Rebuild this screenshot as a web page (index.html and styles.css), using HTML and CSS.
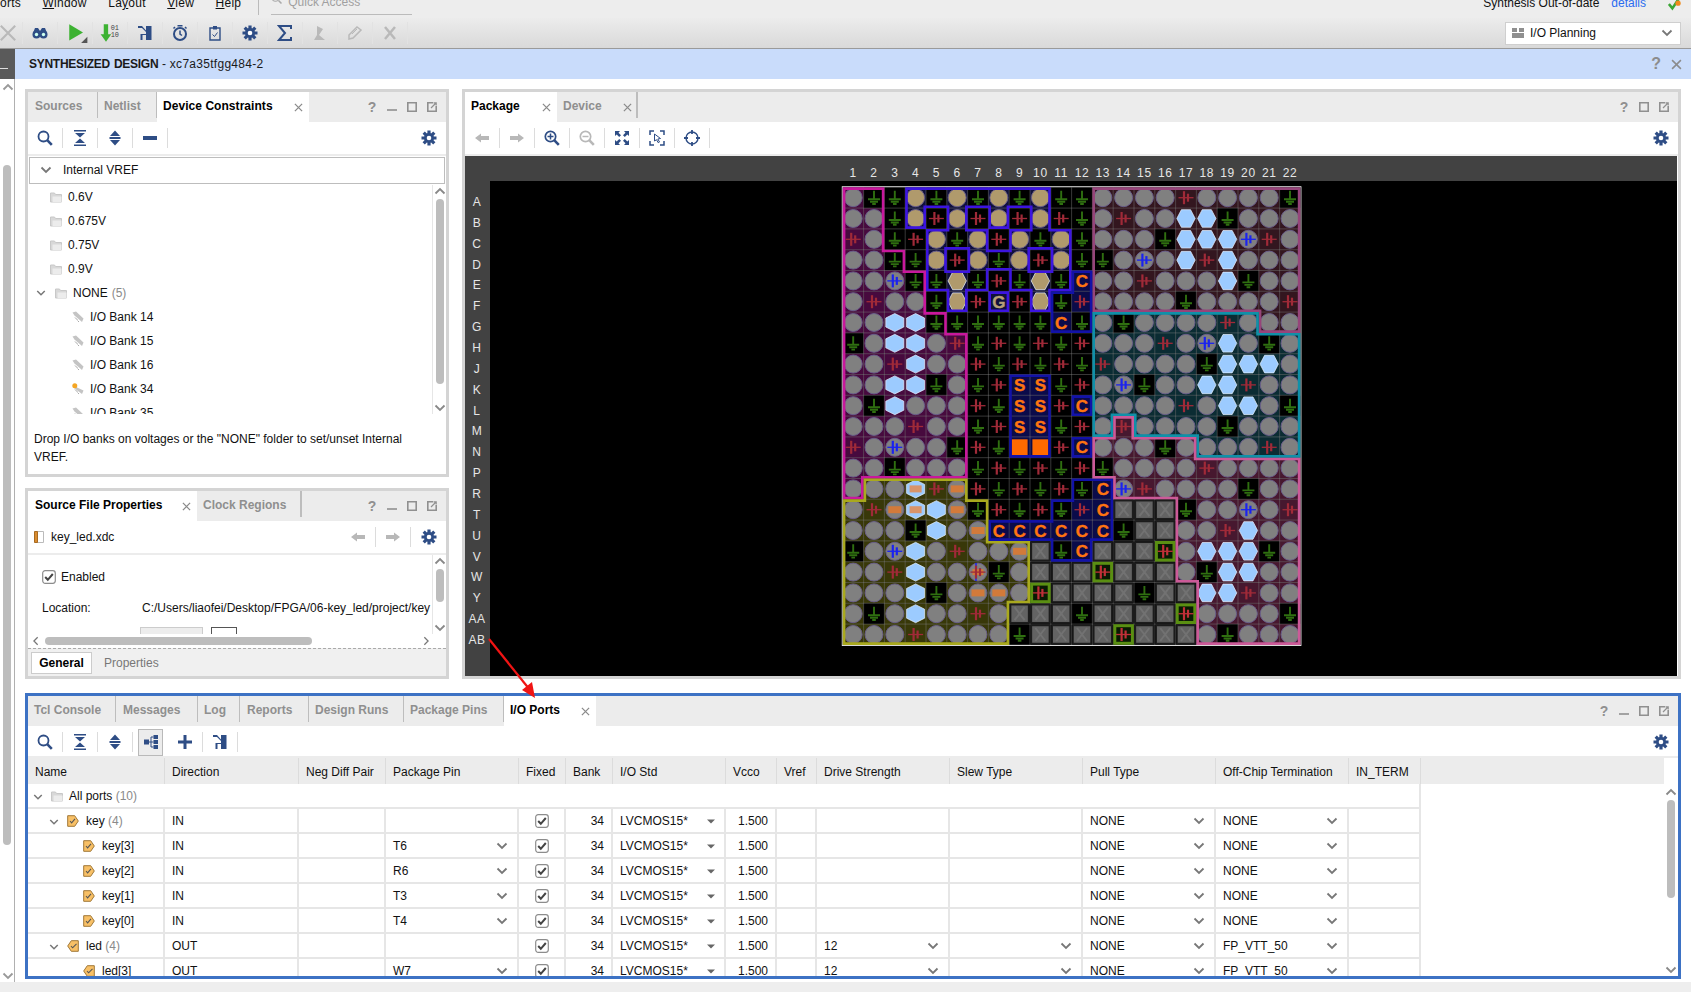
FILE: index.html
```html
<!DOCTYPE html>
<html lang="en">
<head>
<meta charset="utf-8">
<title>I/O Planning</title>
<link rel="stylesheet" href="styles.css">
</head>
<body>
<svg class="defs" width="0" height="0" aria-hidden="true">
  <defs>
    <symbol id="i-search" viewBox="0 0 16 16"><circle cx="6.5" cy="6.5" r="5" fill="none" stroke="currentColor" stroke-width="1.8"/><path d="M10.2 10.2l4.6 4.6" stroke="currentColor" stroke-width="2.6"/></symbol>
    <symbol id="i-collapse" viewBox="0 0 16 16"><path d="M2 0h12v1.6H2zM3 3h10L8 7.6zM8 8.4L13 13H3zM2 14.4h12V16H2z" fill="currentColor"/></symbol>
    <symbol id="i-expand" viewBox="0 0 16 16"><path d="M8 .5L13 6H3zM2.5 7h11v2h-11zM3 10h10l-5 5.500z" fill="currentColor"/></symbol>
    <symbol id="i-minus" viewBox="0 0 16 16"><path d="M1 6h14v4H1z" fill="currentColor"/></symbol>
    <symbol id="i-plus" viewBox="0 0 16 16"><path d="M6.500 1h3v5.500H15v3H9.500V15h-3V9.500H1v-3h5.500z" fill="currentColor"/></symbol>
    <symbol id="i-hier" viewBox="0 0 16 16"><path d="M1 5.500h5v5H1zM10.500 1H15v4h-4.500zM10.500 6h4.500v4h-4.500zM10.500 11H15v4h-4.500z" fill="currentColor"/><path d="M6 8h4.500M8 3v10M8 3h2.500M8 13h2.500" stroke="currentColor" fill="none"/></symbol>
    <symbol id="i-fork" viewBox="0 0 16 16"><path d="M1 1h4l4 4.500V1h5.500v14H9v-5H5.500V15H3.500v-6H9V7L5 3H1z" fill="currentColor"/></symbol>
    <symbol id="i-gear" viewBox="0 0 16 16"><g stroke="currentColor" stroke-width="3.200"><path d="M8 .5v15M.5 8h15M2.700 2.700l10.600 10.600M13.300 2.700L2.700 13.300"/></g><circle cx="8" cy="8" r="5" fill="currentColor"/><circle cx="8" cy="8" r="2.300" fill="#fff"/></symbol>
    <symbol id="i-left" viewBox="0 0 16 16"><path d="M1 8l6-4.500V6h8v4H7v2.500z" fill="currentColor"/></symbol>
    <symbol id="i-right" viewBox="0 0 16 16"><path d="M15 8L9 3.500V6H1v4h8v2.500z" fill="currentColor"/></symbol>
    <symbol id="i-zoomin" viewBox="0 0 16 16"><circle cx="6.500" cy="6.500" r="5.200" fill="none" stroke="currentColor" stroke-width="1.700"/><path d="M10.200 10.200l4.600 4.600" stroke="currentColor" stroke-width="2.600"/><path d="M6.500 3.500v6M3.500 6.500h6" stroke="currentColor" stroke-width="1.500"/></symbol>
    <symbol id="i-zoomout" viewBox="0 0 16 16"><circle cx="6.500" cy="6.500" r="5.200" fill="none" stroke="currentColor" stroke-width="1.700"/><path d="M10.200 10.200l4.600 4.600" stroke="currentColor" stroke-width="2.600"/><path d="M3.500 6.500h6" stroke="currentColor" stroke-width="1.500"/></symbol>
    <symbol id="i-fit" viewBox="0 0 16 16"><path d="M1 1h5L4.500 2.700 7 5.200 5.200 7 2.700 4.500 1 6zM15 1v5l-1.700-1.500L10.800 7 9 5.200l2.500-2.500L10 1zM1 15v-5l1.700 1.500L5.200 9 7 10.800l-2.500 2.500L6 15zM15 15h-5l1.500-1.700L9 10.800 10.800 9l2.500 2.500L15 10z" fill="currentColor"/></symbol>
    <symbol id="i-select" viewBox="0 0 16 16"><path d="M1 5V1h4M11 1h4v4M15 11v4h-4M5 15H1v-4" fill="none" stroke="currentColor" stroke-width="1.500"/><path d="M5.500 4l6 4.500-2.700.5 1.700 3-1.300.7-1.700-3L5.500 11z" fill="#fff" stroke="currentColor"/></symbol>
    <symbol id="i-target" viewBox="0 0 16 16"><circle cx="8" cy="8" r="6" fill="none" stroke="currentColor" stroke-width="1.400"/><path d="M8 0v4M8 12v4M0 8h4M12 8h4" stroke="currentColor" stroke-width="1.800"/></symbol>
    <symbol id="i-x" viewBox="0 0 10 10"><path d="M1 1l8 8M9 1L1 9" stroke="currentColor" stroke-width="1.400" fill="none"/></symbol>
    <symbol id="i-down" viewBox="0 0 12 12"><path d="M1.500 3.500L6 8l4.500-4.500" stroke="currentColor" stroke-width="1.800" fill="none"/></symbol>
    <symbol id="i-up" viewBox="0 0 12 12"><path d="M1.500 8.500L6 4l4.500 4.500" stroke="currentColor" stroke-width="1.800" fill="none"/></symbol>
    <symbol id="i-chl" viewBox="0 0 12 12"><path d="M8 1.500L3.500 6 8 10.500" stroke="currentColor" stroke-width="1.500" fill="none"/></symbol>
    <symbol id="i-chr" viewBox="0 0 12 12"><path d="M4 1.500L8.500 6 4 10.500" stroke="currentColor" stroke-width="1.500" fill="none"/></symbol>
    <symbol id="i-tri" viewBox="0 0 8 8"><path d="M0 2.500h8L4 6.500z" fill="currentColor"/></symbol>
    <symbol id="i-dash" viewBox="0 0 10 10"><path d="M0 8h10" stroke="currentColor" stroke-width="1.600"/></symbol>
    <symbol id="i-box" viewBox="0 0 10 10"><path d="M.8.8h8.400v8.400H.8z" fill="none" stroke="currentColor" stroke-width="1.600"/></symbol>
    <symbol id="i-pop" viewBox="0 0 10 10"><path d="M6 .8H.8v8.400h8.400V4" fill="none" stroke="currentColor" stroke-width="1.600"/><path d="M4 6l5-5M6.500.8h2.700v2.700" fill="none" stroke="currentColor" stroke-width="1.200"/></symbol>
    <symbol id="i-folder" viewBox="0 0 12 12"><path d="M.5 2h4l1 1.500h6V11H.5z" fill="#d8d8d8" stroke="#c8c8c8"/><path d="M2.500 5.500h9V11h-9z" fill="#ececec"/></symbol>
    <symbol id="i-bank" viewBox="0 0 12 12"><path d="M.5 1.500l3.500-1 7.500 7-1.500 3.500-7.500-6.500z" fill="#c4c4c4"/><path d="M3 6.500l2.500 2.500M5.500 9.500L7 11" stroke="#aaa"/></symbol>
    <symbol id="i-bankon" viewBox="0 0 12 12"><path d="M3 3.500l8.500 4-1.500 3.500L2 5z" fill="#c4c4c4"/><circle cx="2.800" cy="2.800" r="2.500" fill="#f5a623"/><path d="M3 6.500l2.500 2.500M5.500 9.500L7 11" stroke="#aaa"/></symbol>
    <symbol id="i-port" viewBox="0 0 12 12"><path d="M.7.700h7l3.600 5.300-3.600 5.300h-7z" fill="#f8c066" stroke="#a07838"/><path d="M3 6l1.600 1.800L8 3.800" stroke="#555" stroke-width="1.100" fill="none"/></symbol>
    <symbol id="i-portout" viewBox="0 0 12 12"><path d="M11.300.700h-7L.7 6l3.600 5.300h7z" fill="#f8c066" stroke="#a07838"/><path d="M4 6l1.600 1.800L9.500 3.800" stroke="#555" stroke-width="1.100" fill="none"/></symbol>
    <symbol id="i-check" viewBox="0 0 14 14"><rect x=".7" y=".7" width="12.600" height="12.600" rx="2.500" fill="#fff" stroke="#8c8c8c" stroke-width="1.200"/><path d="M3.200 7l2.600 2.800L10.800 4" stroke="#444" stroke-width="2" fill="none"/></symbol>
  </defs>
</svg>

<div class="menubar">
  <span>orts</span><span><u>W</u>indow</span><span>La<u>y</u>out</span><span><u>V</u>iew</span><span><u>H</u>elp</span>
  <div class="quick"><svg class="ic12" viewBox="0 0 16 16"><circle cx="6" cy="6" r="5" fill="none" stroke="#aaa" stroke-width="1.500"/><path d="M10 10l4 4" stroke="#aaa" stroke-width="2"/></svg>Quick Access</div>
  <div class="status"><span>Synthesis Out-of-date</span><span class="link">details</span><svg class="ic16" viewBox="0 0 16 16"><path d="M1 8l4 5L13 1" stroke="#3aa535" stroke-width="3" fill="none"/><circle cx="11.500" cy="7" r="3" fill="#f08a1c"/></svg></div>
</div>

<div class="mainbar">
  <div class="tool-top dim"><svg class="ic16" viewBox="0 0 10 10"><path d="M.5.500l9 9M9.500.500l-9 9" stroke="currentColor" stroke-width="1.300"/></svg></div>
  <div class="tool-top"><svg class="ic16" viewBox="0 0 16 16"><circle cx="4.500" cy="9.500" r="4" fill="#2e4d85"/><circle cx="11.500" cy="9.500" r="4" fill="#2e4d85"/><path d="M3 3h3l2 3 2-3h3l2 5H1z" fill="#2e4d85"/><circle cx="4.500" cy="9.500" r="1.700" fill="#cfe"/><circle cx="11.500" cy="9.500" r="1.700" fill="#cfe"/></svg></div>
  <div class="tool-top"><svg class="ic-play" viewBox="0 0 16 16"><path d="M1 1l11 6.500L1 14z" fill="#3db232"/><path d="M15.500 11v5h-5z" fill="#555"/></svg></div>
  <div class="tool-top"><svg class="ic-run" viewBox="0 0 16 16"><path d="M3 1h3.500v8H9l-4.200 6L.5 9H3z" fill="#3db232"/><text x="8.600" y="5.500" class="bits">01</text><text x="8.600" y="11" class="bits">10</text></svg></div>
  <div class="tool-top blue"><svg class="ic16"><use href="#i-fork"/></svg></div>
  <div class="tool-top blue"><svg class="ic16" viewBox="0 0 16 16"><circle cx="8" cy="9" r="6" fill="none" stroke="currentColor" stroke-width="2"/><path d="M8 5.500V9l2 1.500M5.500 .8h5M3 2l-1.500 1.500M13 2l1.500 1.500" stroke="currentColor" stroke-width="1.500" fill="none"/></svg></div>
  <div class="tool-top blue"><svg class="ic16" viewBox="0 0 16 16"><path d="M3 3h10v12H3z" fill="none" stroke="currentColor" stroke-width="1.400"/><path d="M6 1h4v3.500H6z" fill="currentColor"/><path d="M5.500 9.500l2 2 3-4" stroke="currentColor" fill="none"/></svg></div>
  <div class="tool-top blue"><svg class="ic16"><use href="#i-gear"/></svg></div>
  <div class="tool-top blue"><svg class="ic16" viewBox="0 0 16 16"><path d="M14 4V1H2l6 7-6 7h12v-3" fill="none" stroke="currentColor" stroke-width="2"/></svg></div>
  <div class="tool-top dim"><svg class="ic16" viewBox="0 0 16 16"><path d="M5 1l6 3-4 6 6 5H2l3-5z" fill="currentColor"/></svg></div>
  <div class="tool-top dim"><svg class="ic16" viewBox="0 0 16 16"><path d="M2 10l8-8 4 3-8 8-4 1z" fill="none" stroke="currentColor" stroke-width="1.500"/><path d="M5 9l5-5" stroke="currentColor"/></svg></div>
  <div class="tool-top dim"><svg class="ic16" viewBox="0 0 16 16"><path d="M3 2l10 12M13 2L3 14" stroke="currentColor" stroke-width="2.500"/></svg></div>
  <div class="layout-select"><span class="layout-ic"></span><span>I/O Planning</span><svg class="ic12 chev"><use href="#i-down"/></svg></div>
</div>

<div class="banner">
  <div class="banner-tab"><span></span></div>
  <div class="banner-title"><b>SYNTHESIZED DESIGN</b> - xc7a35tfgg484-2</div>
  <span class="banner-q">?</span>
  <svg class="banner-x"><use href="#i-x"/></svg>
</div>

<div class="main">
  <div class="gutter">
    <svg class="ic12 sb-arrow"><use href="#i-up"/></svg>
    <div class="gutter-thumb"></div>
    <svg class="ic12 sb-arrow gutter-down"><use href="#i-down"/></svg>
  </div>

  <div class="workspace">
    <div class="top-row">
      <div class="left-col">
        <section class="panel panel-dc">
          <div class="tabs">
            <div class="tab w-sources">Sources</div>
            <div class="tab w-netlist">Netlist</div>
            <div class="tab active w-dc">Device Constraints<svg class="tab-x"><use href="#i-x"/></svg></div>
            <div class="win-ctrls"><span class="q">?</span><svg class="wc"><use href="#i-dash"/></svg><svg class="wc"><use href="#i-box"/></svg><svg class="wc"><use href="#i-pop"/></svg></div>
          </div>
          <div class="toolbar">
            <div class="tool"><svg class="ic16"><use href="#i-search"/></svg></div>
            <div class="tool"><svg class="ic16"><use href="#i-collapse"/></svg></div>
            <div class="tool"><svg class="ic16"><use href="#i-expand"/></svg></div>
            <div class="tool"><svg class="ic16"><use href="#i-minus"/></svg></div>
            <div class="tool gear"><svg class="ic16"><use href="#i-gear"/></svg></div>
          </div>
          <div class="vref-head"><svg class="ic12 chev"><use href="#i-down"/></svg><span>Internal VREF</span></div>
          <div class="tree-wrap">
            <div class="tree">
              <div class="tree-row l1"><svg class="ic12"><use href="#i-folder"/></svg>0.6V</div>
              <div class="tree-row l1"><svg class="ic12"><use href="#i-folder"/></svg>0.675V</div>
              <div class="tree-row l1"><svg class="ic12"><use href="#i-folder"/></svg>0.75V</div>
              <div class="tree-row l1"><svg class="ic12"><use href="#i-folder"/></svg>0.9V</div>
              <div class="tree-row l0"><svg class="ic10 chev"><use href="#i-down"/></svg><svg class="ic12"><use href="#i-folder"/></svg>NONE <span class="count">(5)</span></div>
              <div class="tree-row l2"><svg class="ic12"><use href="#i-bank"/></svg>I/O Bank 14</div>
              <div class="tree-row l2"><svg class="ic12"><use href="#i-bank"/></svg>I/O Bank 15</div>
              <div class="tree-row l2"><svg class="ic12"><use href="#i-bank"/></svg>I/O Bank 16</div>
              <div class="tree-row l2"><svg class="ic12"><use href="#i-bankon"/></svg>I/O Bank 34</div>
              <div class="tree-row l2"><svg class="ic12"><use href="#i-bank"/></svg>I/O Bank 35</div>
            </div>
            <div class="vscroll">
              <svg class="ic12 sb-arrow"><use href="#i-up"/></svg>
              <div class="thumb thumb-tree"></div>
              <svg class="ic12 sb-arrow sb-end"><use href="#i-down"/></svg>
            </div>
          </div>
          <p class="note">Drop I/O banks on voltages or the "NONE" folder to set/unset Internal VREF.</p>
        </section>

        <section class="panel panel-sfp">
          <div class="tabs">
            <div class="tab active w-sfp">Source File Properties<svg class="tab-x"><use href="#i-x"/></svg></div>
            <div class="tab w-clock">Clock Regions</div>
            <div class="win-ctrls"><span class="q">?</span><svg class="wc"><use href="#i-dash"/></svg><svg class="wc"><use href="#i-box"/></svg><svg class="wc"><use href="#i-pop"/></svg></div>
          </div>
          <div class="filebar">
            <svg class="ic12 file-ic" viewBox="0 0 10 12"><path d="M3.500.500h6v11h-6z" fill="#fff" stroke="#bbb"/><path d="M.5.500h3v11h-3z" fill="#d98c30" stroke="#a86a20"/></svg>
            <span class="file-name">key_led.xdc</span>
            <div class="tool dimmed"><svg class="ic16"><use href="#i-left"/></svg></div>
            <div class="tool dimmed"><svg class="ic16"><use href="#i-right"/></svg></div>
            <div class="tool gear-inline"><svg class="ic16"><use href="#i-gear"/></svg></div>
          </div>
          <div class="props-wrap">
            <div class="props">
              <div class="enabled"><svg class="ic14"><use href="#i-check"/></svg><span>Enabled</span></div>
              <div class="location"><span class="loc-label">Location:</span><span class="loc-path">C:/Users/liaofei/Desktop/FPGA/06-key_led/project/key</span></div>
              <div class="btn-row"><span class="stub stub-a"></span><span class="stub stub-b"></span></div>
            </div>
            <div class="vscroll">
              <svg class="ic12 sb-arrow"><use href="#i-up"/></svg>
              <div class="thumb thumb-props"></div>
              <svg class="ic12 sb-arrow sb-end"><use href="#i-down"/></svg>
            </div>
          </div>
          <div class="hscroll"><svg class="ic10"><use href="#i-chl"/></svg><div class="hthumb"></div><svg class="ic10 sb-end-h"><use href="#i-chr"/></svg></div>
          <div class="subtabs"><span class="subtab on">General</span><span class="subtab">Properties</span></div>
        </section>
      </div>

      <section class="panel panel-pkg">
        <div class="tabs">
          <div class="tab active w-pkg">Package<svg class="tab-x"><use href="#i-x"/></svg></div>
          <div class="tab w-device">Device<svg class="tab-x"><use href="#i-x"/></svg></div>
          <div class="win-ctrls"><span class="q">?</span><svg class="wc"><use href="#i-box"/></svg><svg class="wc"><use href="#i-pop"/></svg></div>
        </div>
        <div class="toolbar">
          <div class="tool dimmed"><svg class="ic16"><use href="#i-left"/></svg></div>
          <div class="tool dimmed"><svg class="ic16"><use href="#i-right"/></svg></div>
          <div class="tool"><svg class="ic16"><use href="#i-zoomin"/></svg></div>
          <div class="tool dimmed"><svg class="ic16"><use href="#i-zoomout"/></svg></div>
          <div class="tool"><svg class="ic16"><use href="#i-fit"/></svg></div>
          <div class="tool"><svg class="ic16"><use href="#i-select"/></svg></div>
          <div class="tool"><svg class="ic16"><use href="#i-target"/></svg></div>
          <div class="tool gear"><svg class="ic16"><use href="#i-gear"/></svg></div>
        </div>
        <div id="package" class="package"></div>
      </section>
    </div>

    <section class="panel-io">
      <div class="tabs">
        <div class="tab w-tcl">Tcl Console</div>
        <div class="tab w-msg">Messages</div>
        <div class="tab w-log">Log</div>
        <div class="tab w-rep">Reports</div>
        <div class="tab w-runs">Design Runs</div>
        <div class="tab w-pins">Package Pins</div>
        <div class="tab active w-io">I/O Ports<svg class="tab-x"><use href="#i-x"/></svg></div>
        <div class="win-ctrls"><span class="q">?</span><svg class="wc"><use href="#i-dash"/></svg><svg class="wc"><use href="#i-box"/></svg><svg class="wc"><use href="#i-pop"/></svg></div>
      </div>
      <div class="toolbar">
        <div class="tool"><svg class="ic16"><use href="#i-search"/></svg></div>
        <div class="tool"><svg class="ic16"><use href="#i-collapse"/></svg></div>
        <div class="tool"><svg class="ic16"><use href="#i-expand"/></svg></div>
        <div class="tool toggled"><svg class="ic16"><use href="#i-hier"/></svg></div>
        <div class="tool"><svg class="ic16"><use href="#i-plus"/></svg></div>
        <div class="tool"><svg class="ic16"><use href="#i-fork"/></svg></div>
        <div class="tool gear"><svg class="ic16"><use href="#i-gear"/></svg></div>
      </div>
      <div class="table-wrap">
        <table class="ports">
          <colgroup>
            <col class="c-name"><col class="c-dir"><col class="c-neg"><col class="c-pkg"><col class="c-fix"><col class="c-bank"><col class="c-std"><col class="c-vcco"><col class="c-vref"><col class="c-drive"><col class="c-slew"><col class="c-pull"><col class="c-off"><col class="c-term"><col>
          </colgroup>
          <thead><tr><th>Name</th><th>Direction</th><th>Neg Diff Pair</th><th>Package Pin</th><th>Fixed</th><th>Bank</th><th>I/O Std</th><th>Vcco</th><th>Vref</th><th>Drive Strength</th><th>Slew Type</th><th>Pull Type</th><th>Off-Chip Termination</th><th>IN_TERM</th><th class="filler"></th></tr></thead>
          <tbody>
            <tr><td colspan="14" class="name ind-all"><svg class="ic10 chev"><use href="#i-down"/></svg><svg class="ic12"><use href="#i-folder"/></svg>All ports <span class="count">(10)</span></td></tr>
            <tr><td class="name ind-grp"><svg class="ic10 chev"><use href="#i-down"/></svg><svg class="ic12"><use href="#i-port"/></svg>key <span class="count">(4)</span></td><td>IN</td><td></td><td></td><td class="ck"><svg class="ic14"><use href="#i-check"/></svg></td><td class="num">34</td><td><div class="sel">LVCMOS15*<svg class="tri"><use href="#i-tri"/></svg></div></td><td class="num">1.500</td><td></td><td></td><td></td><td><div class="sel">NONE<svg class="ic12 chev"><use href="#i-down"/></svg></div></td><td><div class="sel">NONE<svg class="ic12 chev"><use href="#i-down"/></svg></div></td><td></td></tr>
            <tr><td class="name ind-leaf"><svg class="ic12"><use href="#i-port"/></svg>key[3]</td><td>IN</td><td></td><td><div class="sel">T6<svg class="ic12 chev"><use href="#i-down"/></svg></div></td><td class="ck"><svg class="ic14"><use href="#i-check"/></svg></td><td class="num">34</td><td><div class="sel">LVCMOS15*<svg class="tri"><use href="#i-tri"/></svg></div></td><td class="num">1.500</td><td></td><td></td><td></td><td><div class="sel">NONE<svg class="ic12 chev"><use href="#i-down"/></svg></div></td><td><div class="sel">NONE<svg class="ic12 chev"><use href="#i-down"/></svg></div></td><td></td></tr>
            <tr><td class="name ind-leaf"><svg class="ic12"><use href="#i-port"/></svg>key[2]</td><td>IN</td><td></td><td><div class="sel">R6<svg class="ic12 chev"><use href="#i-down"/></svg></div></td><td class="ck"><svg class="ic14"><use href="#i-check"/></svg></td><td class="num">34</td><td><div class="sel">LVCMOS15*<svg class="tri"><use href="#i-tri"/></svg></div></td><td class="num">1.500</td><td></td><td></td><td></td><td><div class="sel">NONE<svg class="ic12 chev"><use href="#i-down"/></svg></div></td><td><div class="sel">NONE<svg class="ic12 chev"><use href="#i-down"/></svg></div></td><td></td></tr>
            <tr><td class="name ind-leaf"><svg class="ic12"><use href="#i-port"/></svg>key[1]</td><td>IN</td><td></td><td><div class="sel">T3<svg class="ic12 chev"><use href="#i-down"/></svg></div></td><td class="ck"><svg class="ic14"><use href="#i-check"/></svg></td><td class="num">34</td><td><div class="sel">LVCMOS15*<svg class="tri"><use href="#i-tri"/></svg></div></td><td class="num">1.500</td><td></td><td></td><td></td><td><div class="sel">NONE<svg class="ic12 chev"><use href="#i-down"/></svg></div></td><td><div class="sel">NONE<svg class="ic12 chev"><use href="#i-down"/></svg></div></td><td></td></tr>
            <tr><td class="name ind-leaf"><svg class="ic12"><use href="#i-port"/></svg>key[0]</td><td>IN</td><td></td><td><div class="sel">T4<svg class="ic12 chev"><use href="#i-down"/></svg></div></td><td class="ck"><svg class="ic14"><use href="#i-check"/></svg></td><td class="num">34</td><td><div class="sel">LVCMOS15*<svg class="tri"><use href="#i-tri"/></svg></div></td><td class="num">1.500</td><td></td><td></td><td></td><td><div class="sel">NONE<svg class="ic12 chev"><use href="#i-down"/></svg></div></td><td><div class="sel">NONE<svg class="ic12 chev"><use href="#i-down"/></svg></div></td><td></td></tr>
            <tr><td class="name ind-grp"><svg class="ic10 chev"><use href="#i-down"/></svg><svg class="ic12"><use href="#i-portout"/></svg>led <span class="count">(4)</span></td><td>OUT</td><td></td><td></td><td class="ck"><svg class="ic14"><use href="#i-check"/></svg></td><td class="num">34</td><td><div class="sel">LVCMOS15*<svg class="tri"><use href="#i-tri"/></svg></div></td><td class="num">1.500</td><td></td><td><div class="sel">12<svg class="ic12 chev"><use href="#i-down"/></svg></div></td><td><div class="sel"><span></span><svg class="ic12 chev"><use href="#i-down"/></svg></div></td><td><div class="sel">NONE<svg class="ic12 chev"><use href="#i-down"/></svg></div></td><td><div class="sel">FP_VTT_50<svg class="ic12 chev"><use href="#i-down"/></svg></div></td><td></td></tr>
            <tr><td class="name ind-leaf"><svg class="ic12"><use href="#i-portout"/></svg>led[3]</td><td>OUT</td><td></td><td><div class="sel">W7<svg class="ic12 chev"><use href="#i-down"/></svg></div></td><td class="ck"><svg class="ic14"><use href="#i-check"/></svg></td><td class="num">34</td><td><div class="sel">LVCMOS15*<svg class="tri"><use href="#i-tri"/></svg></div></td><td class="num">1.500</td><td></td><td><div class="sel">12<svg class="ic12 chev"><use href="#i-down"/></svg></div></td><td><div class="sel"><span></span><svg class="ic12 chev"><use href="#i-down"/></svg></div></td><td><div class="sel">NONE<svg class="ic12 chev"><use href="#i-down"/></svg></div></td><td><div class="sel">FP_VTT_50<svg class="ic12 chev"><use href="#i-down"/></svg></div></td><td></td></tr>
          </tbody>
        </table>
        <div class="vscroll table-scroll">
          <svg class="ic12 sb-arrow"><use href="#i-up"/></svg>
          <div class="thumb thumb-table"></div>
          <svg class="ic12 sb-arrow sb-end"><use href="#i-down"/></svg>
        </div>
      </div>
    </section>
  </div>
</div>
<div class="footer"></div>

<svg class="callout" viewBox="0 0 60 70" aria-hidden="true"><path d="M3 3L44 54" stroke="#f01414" stroke-width="2.200"/><path d="M49 62L36 54l10-8z" fill="#f01414"/></svg>

<script src="package.js"></script>
</body>
</html>
```

FILE: styles.css
```css
* { box-sizing: border-box; }
html, body { margin: 0; padding: 0; }
body {
  width: 1691px; height: 992px; overflow: hidden; position: relative;
  background: #fff; color: #111;
  font: 12px/14px "Liberation Sans", Arial, sans-serif;
  display: flex; flex-direction: column;
}
.defs { position: absolute; }
svg { display: block; flex: none; }
.ic10 { width: 10px; height: 10px; }
.ic12 { width: 12px; height: 12px; }
.ic14 { width: 14px; height: 14px; }
.ic16 { width: 16px; height: 16px; }
.chev { color: #777; }
.count { color: #8a8a8a; }

/* top chrome */
.menubar {
  height: 18px; flex: none; overflow: hidden;
  display: flex; gap: 21.5px; align-items: flex-start;
  background: #ededed; line-height: 14px; letter-spacing: .25px;
}
.menubar > span { margin-top: -4px; }
.quick {
  margin-left: -4.5px; width: 154px; height: 18px; padding: 0 0 0 12px;
  margin-top: -3px;
  display: flex; gap: 5px; align-items: flex-start; color: #a0a0a0;
  border-left: 1px solid #bbb; letter-spacing: 0;
  line-height: 10px;
  background: linear-gradient(#bbb,#bbb) no-repeat 12px 17px / 142px 1px;
}
.quick svg { margin-top: -4px; }
.status { margin-left: auto; margin-top: -4px; display: flex; padding-right: 9px; letter-spacing: 0; }
.status .link { color: #2a6cf0; margin-left: 12px; margin-right: 22px; }
.status svg { margin-top: 1px; width: 14px; height: 14px; }

.mainbar {
  height: 31px; flex: none; display: flex; align-items: center;
  background: linear-gradient(#ececec, #d9d9d9);
  border-bottom: 1px solid #9a9a9a;
}
.tool-top {
  width: 35px; height: 22px; display: flex; align-items: center; justify-content: center;
  border-right: 1px solid #e2e2e2; flex: none;
}
.tool-top:first-child { width: 31px; margin-left: -8px; justify-content: flex-start; padding-left: 8px; }
.tool-top.dim { color: #b9b9b9; }
.tool-top.blue { color: #2e4d85; }
.ic-play { width: 20px; height: 20px; margin-left: 6px; }
.ic-run { width: 20px; height: 20px; }
.bits { font: 5.500px "Liberation Mono", monospace; fill: #444; }
.layout-select {
  margin-left: auto; margin-right: 10px; width: 176px; height: 23px;
  background: #fff; border: 1px solid #cfcfcf;
  display: flex; align-items: center; padding: 0 7px 0 6px; gap: 6px;
}
.layout-select .chev { margin-left: auto; }
.layout-ic { width: 12px; height: 10px; background: linear-gradient(#8f8f8f,#8f8f8f) 0 0/5px 4px no-repeat, linear-gradient(#8f8f8f,#8f8f8f) 7px 0/5px 4px no-repeat, linear-gradient(#8f8f8f,#8f8f8f) 0 5px/12px 5px no-repeat; }

.banner {
  height: 30px; flex: none; display: flex; align-items: center;
  background: #c9dcfb;
}
.banner-tab { width: 15px; height: 30px; background: #5a5a5a; padding-top: 19px; margin-right: 14px; }
.banner-tab span { display: block; width: 8px; height: 1px; background: #ddd; }
.banner-title { color: #1a1a1a; letter-spacing: .28px; }
.banner-title b { letter-spacing: -.28px; word-spacing: 1px; }
.banner-q { margin-left: auto; font-size: 16px; font-weight: bold; color: #8c8c8c; }
.banner-x { width: 11px; height: 11px; margin: 0 9px 0 10px; color: #8c8c8c; }

/* frame */
.main { height: 903px; flex: none; display: flex; }
.gutter {
  width: 15px; flex: none; border-right: 1px solid #b0b0b0;
  display: flex; flex-direction: column; align-items: flex-start; padding: 2px 0 0 2px;
}
.gutter .sb-arrow { margin-bottom: 0; color: #999; }
.gutter-thumb { width: 8px; height: 680px; background: #bdbdbd; border-radius: 4px; margin: 72px 0 0 1px; }
.gutter-down { margin-top: auto; margin-bottom: 0; }
.workspace { flex: 1; padding: 10px 10px 0 10px; display: flex; flex-direction: column; gap: 14px; }
.top-row { height: 590px; display: flex; gap: 13px; flex: none; }
.left-col { width: 424px; display: flex; flex-direction: column; gap: 11px; flex: none; }

.panel { border: 3px solid #d4d4d4; display: flex; flex-direction: column; background: #fff; }
.panel-dc { height: 388px; }
.panel-sfp { height: 191px; }
.panel-pkg { flex: 1; min-width: 0; }
.panel-io { height: 286px; border: 3px solid #3d72c4; display: flex; flex-direction: column; flex: none; }

/* tabs */
.tabs { height: 30px; flex: none; background: #ececec; display: flex; }
.tab {
  height: 30px; padding: 7px 0 0 6px; color: #8f8f8f; font-weight: bold; flex: none;
  position: relative;
}
.tab::after { content: ""; position: absolute; right: 0; top: 0; width: 1px; height: 26px; background: #bdbdbd; }
.tab.active { background: #fff; color: #000; }
.tab.active::after { display: none; }
.tab-x { position: absolute; right: 6px; top: 11px; width: 9px; height: 9px; color: #8a8a8a; }
.w-sources { width: 70px; padding-left: 7px; } .w-netlist { width: 59px; } .w-dc { width: 152px; letter-spacing: .05px; }
.w-sfp { width: 169px; padding-left: 7px; } .w-clock { width: 105px; } .w-clock::after { width: 2px; }
.w-pkg { width: 92px; } .w-device { width: 81px; } .w-device::after { width: 2px; }
.w-tcl { width: 88px; } .w-msg { width: 82px; padding-left: 7px; } .w-log { width: 42px; } .w-rep { width: 69px; padding-left: 7px; } .w-runs { width: 95px; } .w-pins { width: 100px; }
.w-io { width: 92px; }
.win-ctrls { margin-left: auto; display: flex; align-items: center; padding: 0 9px 0 0; gap: 10px; height: 30px; }
.win-ctrls .q { font-size: 14px; font-weight: bold; color: #909090; width: 10px; text-align: center; }
.wc { width: 10px; height: 10px; color: #909090; }

/* toolbars */
.toolbar { height: 34px; flex: none; display: flex; align-items: center; border-bottom: 2px solid #ececec; color: #2e4d85; }
.panel-io .toolbar { height: 32px; padding-top: 2px; }
.tool {
  width: 35px; height: 20px; flex: none; display: flex; align-items: center; justify-content: center;
  border-right: 1px solid #dcdcdc; color: #2e4d85;
}
.tool.dimmed { color: #b8b8b8; }
.tool.gear { margin-left: auto; border: 0; }
.tool.toggled { border: 1px solid #b9b9b9; background: #ececec; height: 27px; width: 25px; margin: 0 5px; }
.tool.gear-inline { border: 0; margin-left: 0; }

/* tree */
.vref-head {
  height: 27px; flex: none; margin: 1px 1px 1px; border: 1px solid #bdbdbd;
  display: flex; align-items: center; padding: 0 0 2px 10px; gap: 11px;
}
.tree-wrap { height: 229px; flex: none; display: flex; overflow: hidden; }
.tree { flex: 1; }
.tree-row { height: 24px; display: flex; align-items: center; gap: 6px; }
.tree-row .count { margin-left: -2px; }
.l1 { padding-left: 22px; }
.l0 { padding-left: 8px; }
.l0 .ic12 { margin-left: 3px; }
.l2 { padding-left: 44px; }
.vscroll { width: 14px; flex: none; display: flex; flex-direction: column; align-items: center; border-left: 1px solid #e6e6e6; color: #888; }
.sb-arrow { color: #888; }
.sb-end { margin-top: auto; }
.thumb { width: 8px; background: #bdbdbd; border-radius: 4px; }
.thumb-tree { height: 185px; margin-top: 2px; }
.thumb-props { height: 33px; margin-top: 2px; }
.note { margin: 0; padding: 16px 10px 0 6px; line-height: 18px; }

/* source file props */
.filebar { height: 34px; flex: none; display: flex; align-items: center; padding-left: 6px; border-bottom: 2px solid #ececec; }
.file-ic { margin-right: 5px; width: 10px; }
.file-name { margin-right: auto; margin-left: 2px; }
.props-wrap { height: 79px; flex: none; display: flex; overflow: hidden; }
.props { flex: 1; min-width: 0; padding: 15px 0 0 14px; overflow: hidden; white-space: nowrap; }
.enabled { display: flex; gap: 5px; height: 14px; align-items: center; }
.location { display: flex; margin-top: 17px; height: 14px; }
.loc-label { width: 100px; flex: none; }
.btn-row { display: flex; gap: 8px; margin-top: 12px; margin-left: 98px; }
.stub { display: block; height: 20px; border: 1px solid #bbb; }
.stub-a { width: 63px; background: #ededed; border-color: #ccc; }
.stub-b { width: 26px; border-color: #555; }
.hscroll { height: 14px; flex: none; display: flex; align-items: center; padding-left: 3px; color: #777; position: relative; }
.hthumb { width: 267px; height: 8px; background: #bdbdbd; border-radius: 4px; margin-left: 4px; }
.sb-end-h { margin-left: auto; margin-right: 15px; }
.subtabs { flex: 1; background: #f0f0f0; border-top: 1px dashed #aaa; display: flex; align-items: center; padding-left: 3px; gap: 12px; }
.subtab { color: #777; height: 22px; line-height: 22px; }
.subtab.on { color: #000; font-weight: bold; background: #fff; border: 1px solid #ccc; line-height: 20px; width: 61px; text-align: center; }

/* package */
.package { flex: 1; background: #424242; min-height: 0; position: relative; margin-right: 1px; }
.package svg { position: absolute; left: 0; top: 0; }
.pkg-label { font: 12px "Liberation Sans", Arial, sans-serif; fill: #e6e6e6; text-anchor: middle; letter-spacing: .6px; }
.pkg-mark { font: bold 17px "Liberation Sans", Arial, sans-serif; text-anchor: middle; fill: #ff7410; stroke: #ff7410; stroke-width: .4px; }
.pkg-g { fill: #b8a078; stroke: #b8a078; }

/* table */
.table-wrap { flex: 1; min-height: 0; display: flex; overflow: hidden; }
.ports { width: 1636px; table-layout: fixed; border-collapse: separate; border-spacing: 0; align-self: flex-start; flex: none; }
.c-name { width: 137px; } .c-dir { width: 134px; } .c-neg { width: 87px; } .c-pkg { width: 133px; } .c-fix { width: 47px; } .c-bank { width: 47px; }
.c-std { width: 113px; } .c-vcco { width: 51px; } .c-vref { width: 40px; } .c-drive { width: 133px; } .c-slew { width: 133px; } .c-pull { width: 133px; } .c-off { width: 133px; } .c-term { width: 72px; }
.ports th {
  height: 26px; background: #ececec; font-weight: normal; text-align: left; padding: 1px 0 0 7px;
  border-right: 1px solid #dcdcdc; white-space: nowrap; overflow: hidden;
}
.ports th.filler { border: 0; }
.ports td {
  height: 25px; padding: 0 0 0 7px; white-space: nowrap; overflow: hidden;
  border-right: 2px solid #e6e6e6; border-bottom: 2px solid #e6e6e6;
}
.ports td.num { text-align: right; padding-right: 7px; }
.ports td.ck svg { margin: 0 auto; }
.ports td.ck { padding: 0; }
td.name { padding: 0; }
.ports td.ind-all svg, .ports td.ind-grp svg, .ports td.ind-leaf svg { display: inline-block; vertical-align: -2px; }
.ports td.ind-all { padding-left: 5px; }
.ports td.ind-all .ic10 { margin-right: 8px; }
.ports td.ind-all .ic12 { margin-right: 6px; }
.ports td.ind-grp { padding-left: 21px; }
.ports td.ind-grp .ic10 { margin-right: 8px; }
.ports td.ind-grp .ic12 { margin-right: 7px; }
.ports td.ind-leaf { padding-left: 55px; }
.ports td.ind-leaf .ic12 { margin-right: 7px; }
.sel { display: flex; align-items: center; justify-content: space-between; padding-right: 9px; }
.tri { width: 8px; height: 8px; color: #666; margin-right: 0; }
.table-scroll { width: 14px; border: 0; padding-top: 28px; }
.thumb-table { height: 98px; margin-top: 2px; }

.footer { height: 10px; flex: none; background: #eee; }

.callout { position: absolute; left: 486px; top: 636px; width: 60px; height: 70px; }
```

FILE: package.js
```js
(function () {
  var ORIGIN_X = 465, ORIGIN_Y = 156, WIDTH = 1212, HEIGHT = 520;
  var X0 = 842.8 - ORIGIN_X, Y0 = 187.3 - ORIGIN_Y, P = 20.8;

  var rows = ['A','B','C','D','E','F','G','H','J','K','L','M','N','P','R','T','U','V','W','Y','AA','AB'];
  var cells = [
    'oggtgtgtgtgg' + 'ooooroooog',
    'oogtrtrtrtrg' + 'oroohhgooo',
    'rogrtgtrtgtg' + 'oooghhhbro',
    'ooggtrtgtrtg' + 'gobohrhooo',
    'oobggTgrgTgC' + 'oorooohgoo',
    'oroogTrGrTgr' + 'oooogoooor',
    'oohhggggggCg' + 'ogoooorooo',
    'gohhorgrgrgr' + 'ooorobhogo',
    'oorhoorgrgrg' + 'rooooghhho',
    'oohhgogrSSgr' + 'obgoohhroo',
    'oghooorgSSrC' + 'oooorohhog',
    'oooroogrSSgr' + 'oroooogooo',
    'roboogrgOOrC' + 'ooogooooro',
    'oogooogrgrgr' + 'gooooroooo',
    'oooMrmrgrgrg' + 'Cbroooogoo',
    'ormMhmgrgrgr' + 'Cxxxgoobor',
    'oooghomCCCCC' + 'Cgxxoorhoo',
    'gobhoroomxgC' + 'xxxRohhhgo',
    'oorhooBgoxxx' + 'Rxxxoghhoo',
    'ooohgommoRxx' + 'xxgxxhhroo',
    'ogohooroxxxg' + 'xxxxRoooog',
    'oooroooogxxx' + 'xRxxxogooo'
  ];
  var regions = [
    'pp.iiiiiii..' + 'llllllllll',
    'pp.i.i.i.i..' + 'llllllllll',
    'pp..iii.iii.' + 'llllllllll',
    'ppp.i.iii.i.' + 'llllllllll',
    'ppppiii.iiin' + 'llllllllll',
    'pppp.i.i.inn' + 'llllllllll',
    'ppppp.....nn' + 'ttttttttll',
    'pppppp......' + 'tttttttttt',
    'pppppp......' + 'tttttttttt',
    'pppppp..nn..' + 'tttttttttt',
    'pppppp..nn.n' + 'tttttttttt',
    'pppppp..nn..' + 'tktttttttt',
    'pppppp..nn.n' + 'kkkkkttttt',
    'pppppp......' + 'kkkkkkkkkk',
    'pyyyyy.....n' + 'nkkkkkkkkk',
    'yyyyyyy...nn' + 'n...kkkkkk',
    'yyyyyyynnnnn' + 'n...kkkkkk',
    'yyyyyyyyy.nn' + '....kkkkkk',
    'yyyyyyyyy...' + '....kkkkkk',
    'yyyyyyyyy...' + '.....kkkkk',
    'yyyyyyyy....' + '.....kkkkk',
    'yyyyyyyy....' + '.....kkkkk'
  ];
  var tint = { p: '#470a3e', y: '#383809', i: '#000', n: '#0b0b4a', l: '#33161f', t: '#0b2c33', k: '#47182f', '.': '#000' };
  var edge = { p: '#c8189c', y: '#a9a91e', i: '#3c14e0', n: '#1212a8', l: '#96457a', t: '#1090a8', k: '#cc5a98' };

  function ground() {
    return '<path d="M0-7V1M-6 1.500H6M-4 4H4M-1.800 6.300H1.800" stroke="#2f6f10" stroke-width="1.900" fill="none"/>';
  }
  function sign(c) {
    return '<path d="M-7.500 0H7.500" stroke="' + c + '" stroke-width="1.300"/><path d="M-2 -6.500V6.500" stroke="' + c + '" stroke-width="2.200"/><path d="M2 -4V4" stroke="' + c + '" stroke-width="2.200"/>';
  }
  function circle(fill) {
    return '<circle r="9" fill="' + (fill || '#808080') + '" stroke="#6a5f8a" stroke-width="1"/>';
  }
  function hex(fill, flat) {
    var pts = flat ? '-9.200,0 -4.600,-8.800 4.600,-8.800 9.200,0 4.600,8.800 -4.600,8.800' : '0,-9 9,-4.500 9,4.500 0,9 -9,4.500 -9,-4.500';
    return '<polygon points="' + pts + '" fill="' + fill + '" stroke="#e8f2ff" stroke-width=".7"/>';
  }
  function mark(ch, cls, dy) {
    return '<text y="' + (dy || 6) + '" class="pkg-mark ' + (cls || '') + '">' + ch + '</text>';
  }
  function orange(w, h, c) {
    return '<rect x="' + (-w / 2) + '" y="' + (-h / 2) + '" width="' + w + '" height="' + h + '" fill="' + c + '"/>';
  }
  function symbol(code, col) {
    switch (code) {
      case 'o': return circle();
      case 'g': return ground();
      case 'r': return sign('#a02a38');
      case 'h': return hex('#9ccbff', col > 12);
      case 'b': return circle() + sign('#1a22f0');
      case 't': return circle('#b09a6c');
      case 'T': return hex('#b09a6c', true);
      case 'C': return mark('C');
      case 'S': return mark('S');
      case 'G': return mark('G', 'pkg-g');
      case 'O': return orange(16, 16, '#ff6a00');
      case 'x': return '<rect x="-9" y="-9" width="18" height="18" fill="#636363" stroke="#1c1c1c" stroke-width="1.500"/><path d="M-5-6.500L5 6.500M5-6.500L-5 6.500" stroke="#727272" stroke-width="2"/>';
      case 'R': return '<rect x="-8.800" y="-8.800" width="17.600" height="17.600" fill="#0a1a04" stroke="#5a8f12" stroke-width="3"/>' + sign('#c03038');
      case 'm': return circle() + orange(13, 7, '#d27a3a');
      case 'M': return hex('#9ccbff', false) + orange(12, 7, '#d8946a');
      case 'B': return circle() + '<path d="M-2-9V9" stroke="#1a22f0" stroke-width="1.500" stroke-dasharray="3 2"/>' + orange(11, 6, '#d27a3a') + sign('#a02a38');
    }
    return '';
  }

  var out = [];
  out.push('<svg width="' + WIDTH + '" height="' + HEIGHT + '" viewBox="0 0 ' + WIDTH + ' ' + HEIGHT + '">');
  out.push('<rect x="25" y="25" width="' + (WIDTH - 25) + '" height="' + (HEIGHT - 25) + '" fill="#000"/>');

  var i, r, c;
  for (i = 1; i <= 22; i++) {
    out.push('<text class="pkg-label" x="' + (X0 + (i - 0.5) * P).toFixed(1) + '" y="21">' + i + '</text>');
  }
  rows.forEach(function (name, idx) {
    out.push('<text class="pkg-label" x="12" y="' + (50 + idx * 20.85).toFixed(1) + '">' + name + '</text>');
  });

  out.push('<rect x="' + (X0 - 0.5) + '" y="' + (Y0 - 0.5) + '" width="' + (22 * P + 1) + '" height="' + (22 * P + 1) + '" fill="none" stroke="#fff"/>');

  // cell backgrounds
  for (r = 0; r < 22; r++) {
    for (c = 0; c < 22; c++) {
      var code = cells[r][c], reg = regions[r][c];
      var fill = tint[reg];
      if (code === 'g') fill = '#000';
      if (reg === 'i' && (code === 't' || code === 'T' || code === 'G')) fill = '#10103c';
      out.push('<rect x="' + (X0 + c * P).toFixed(2) + '" y="' + (Y0 + r * P).toFixed(2) + '" width="' + (P + 0.1) + '" height="' + (P + 0.1) + '" fill="' + fill + '"/>');
    }
  }
  // pin grid
  var grid = '';
  for (i = 0; i <= 22; i++) {
    grid += 'M' + (X0 + i * P).toFixed(2) + ' ' + Y0 + 'V' + (Y0 + 22 * P).toFixed(2);
    grid += 'M' + X0 + ' ' + (Y0 + i * P).toFixed(2) + 'H' + (X0 + 22 * P).toFixed(2);
  }
  out.push('<path d="' + grid + '" stroke="#8c8c8c" stroke-opacity=".4" stroke-width="1" fill="none"/>');

  // pins
  for (r = 0; r < 22; r++) {
    for (c = 0; c < 22; c++) {
      var cx = X0 + (c + 0.5) * P, cy = Y0 + (r + 0.5) * P;
      out.push('<g transform="translate(' + cx.toFixed(2) + ' ' + cy.toFixed(2) + ')">' + symbol(cells[r][c], c + 1) + '</g>');
    }
  }
  // bank outlines, inset so neighbouring banks show both colours
  function region(rr, cc) {
    if (rr < 0 || rr > 21 || cc < 0 || cc > 21) return '.';
    return regions[rr][cc];
  }
  var I = 1.3, paths = {};
  for (r = 0; r < 22; r++) {
    for (c = 0; c < 22; c++) {
      var g = regions[r][c];
      if (g === '.') continue;
      var x1 = X0 + c * P, x2 = x1 + P, y1 = Y0 + r * P, y2 = y1 + P, d = '';
      var L = region(r, c - 1) !== g, Rr = region(r, c + 1) !== g, U = region(r - 1, c) !== g, D = region(r + 1, c) !== g;
      var ax = x1 + (L ? I : -I), bx = x2 - (Rr ? I : -I), ay = y1 + (U ? I : -I), by = y2 - (D ? I : -I);
      if (U) d += 'M' + ax.toFixed(2) + ' ' + (y1 + I).toFixed(2) + 'H' + bx.toFixed(2);
      if (D) d += 'M' + ax.toFixed(2) + ' ' + (y2 - I).toFixed(2) + 'H' + bx.toFixed(2);
      if (L) d += 'M' + (x1 + I).toFixed(2) + ' ' + ay.toFixed(2) + 'V' + by.toFixed(2);
      if (Rr) d += 'M' + (x2 - I).toFixed(2) + ' ' + ay.toFixed(2) + 'V' + by.toFixed(2);
      paths[g] = (paths[g] || '') + d;
    }
  }
  Object.keys(paths).forEach(function (k) {
    out.push('<path d="' + paths[k] + '" stroke="' + edge[k] + '" stroke-width="2.600" fill="none" stroke-linecap="square"/>');
  });
  out.push('</svg>');
  document.getElementById('package').innerHTML = out.join('');
})();
```
